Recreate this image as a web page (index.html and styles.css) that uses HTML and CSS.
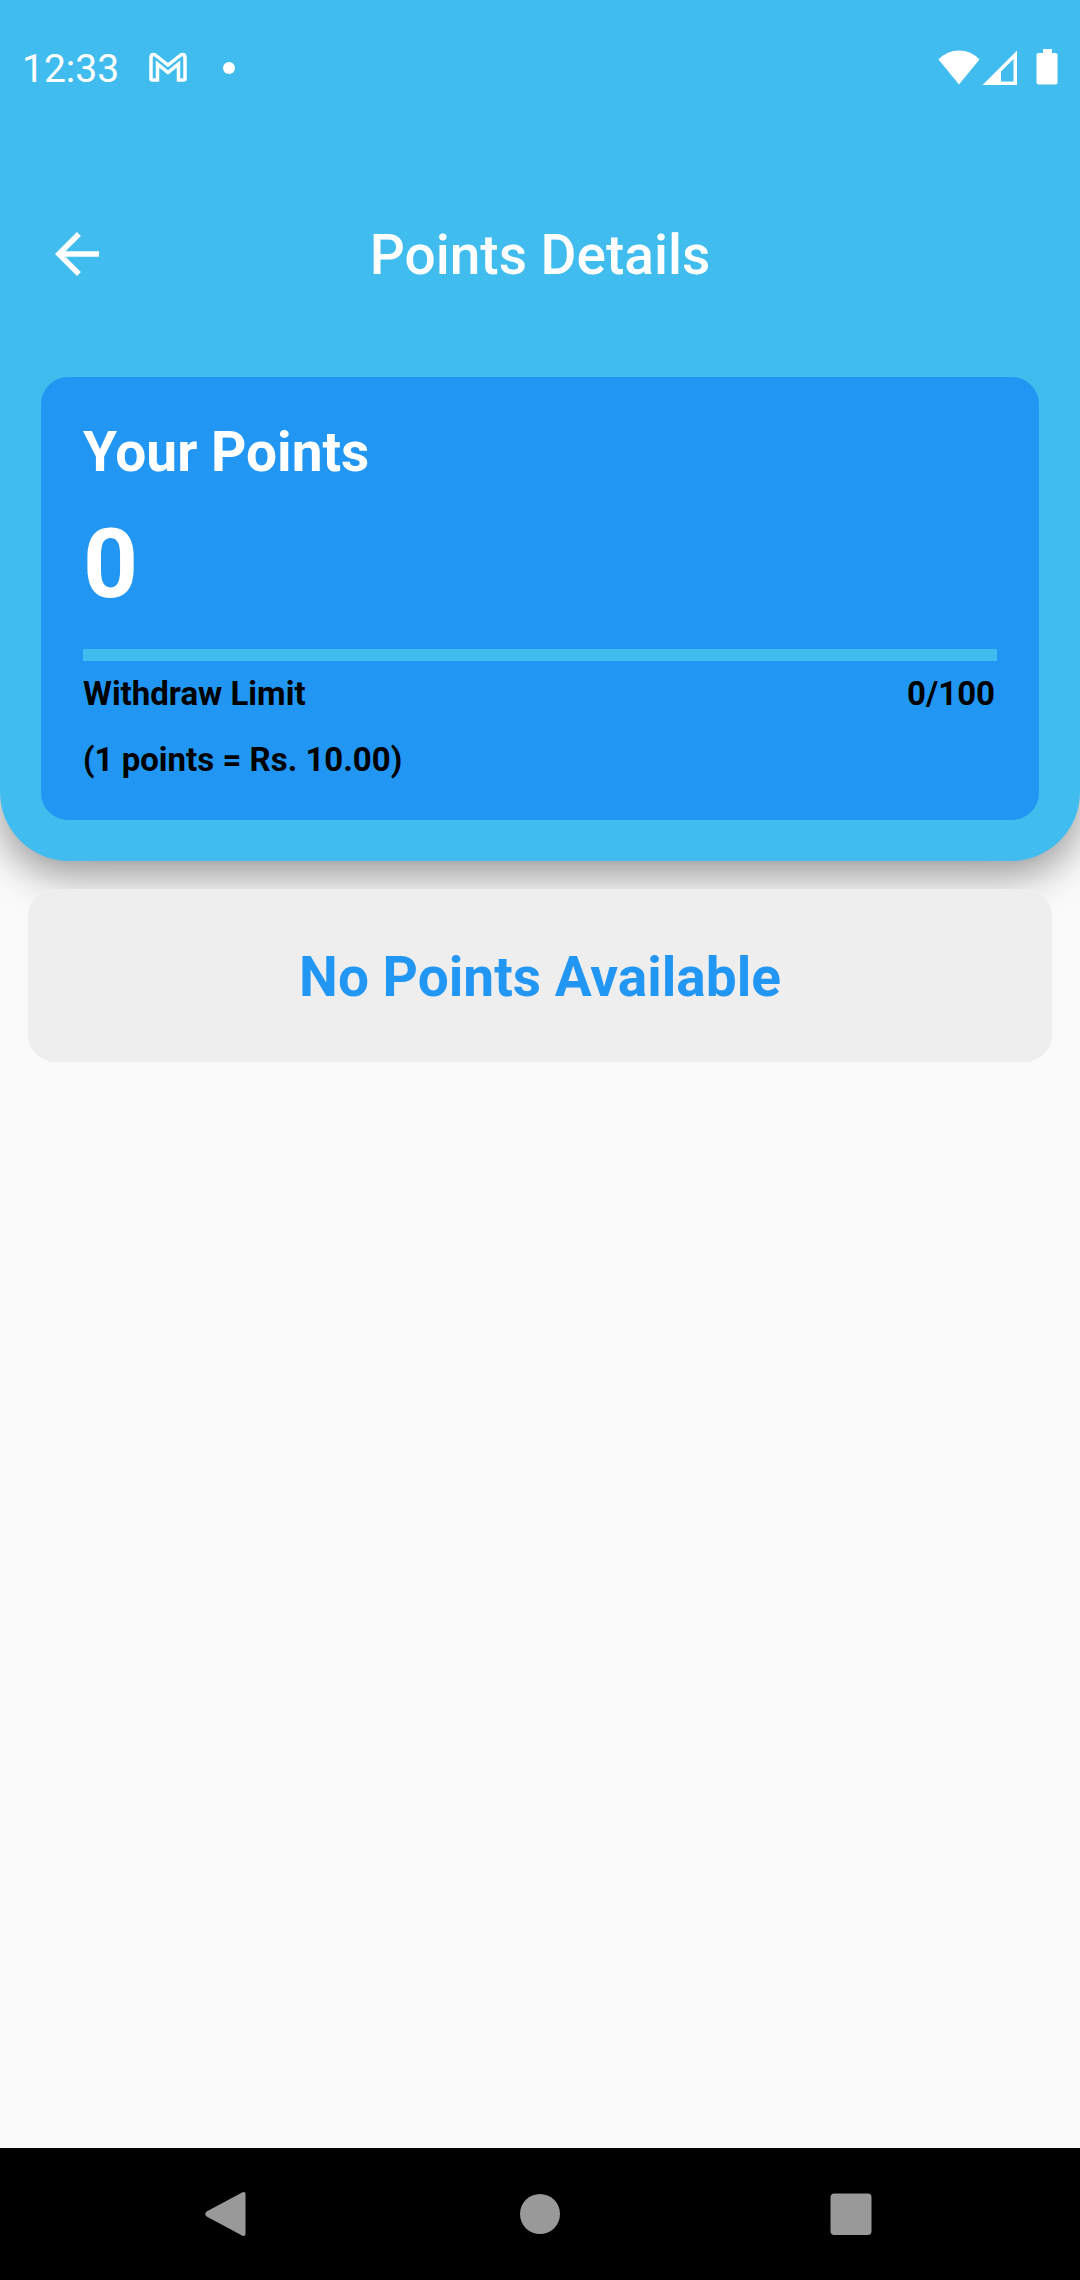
FILE: index.html
```html
<!DOCTYPE html>
<html lang="en">
<head>
<meta charset="utf-8">
<meta name="viewport" content="width=device-width, initial-scale=1">
<title>Points Details</title>
<link rel="stylesheet" href="styles.css">
</head>
<body>
<div class="screen">
  <header class="header">
    <div class="status-bar">
      <div class="status-left">
        <span class="clock">12:33</span>
        <svg class="gmail-icon" viewBox="0 0 40 32" aria-hidden="true">
          <path d="M3 26.500V6Q3 2.500 5.500 2.500Q7 2.500 8 3.500L20 13L32 3.500Q33 2.500 34.500 2.500Q37 2.500 37 6V26.500Q37 28 35.500 28H30.500V12L20 20.500L9.500 12V28H4.500Q3 28 3 26.500Z" fill="none" stroke="#fff" stroke-width="3.500"/>
        </svg>
        <span class="status-dot"></span>
      </div>
      <div class="status-right">
        <svg class="wifi-icon" viewBox="0 0 42 36" aria-hidden="true"><path d="M21 34.500L0.500 9.500Q9 0.500 21 0.500T41.500 9.500Z" fill="#fff"/></svg>
        <svg class="signal-icon" viewBox="0 0 36 36" aria-hidden="true"><path d="M35 0.500V35H0.500ZM31.500 9L19 21.500V31.500H31.500Z" fill="#fff" fill-rule="evenodd"/></svg>
        <svg class="battery-icon" viewBox="0 0 22 36" aria-hidden="true"><path d="M7 -1H16V3H19.500Q21.500 3 21.500 5V32.500Q21.500 34.500 19.500 34.500H2.500Q0.500 34.500 0.500 32.500V5Q0.500 3 2.500 3H7Z" fill="#fff"/></svg>
      </div>
    </div>
    <div class="app-bar">
      <button class="back-button" type="button" aria-label="Back">
        <svg class="back-icon" viewBox="0 0 24 24" aria-hidden="true"><path d="M20 11H7.830l5.590-5.590L12 4l-8 8 8 8 1.410-1.410L7.830 13H20v-2z" fill="#fff"/></svg>
      </button>
      <h1 class="title">Points Details</h1>
    </div>
    <section class="points-card">
      <h2 class="card-title">Your Points</h2>
      <p class="points-value">0</p>
      <progress class="limit-bar" value="0" max="100" aria-labelledby="limit-label"></progress>
      <div class="limit-row">
        <span id="limit-label">Withdraw Limit</span>
        <span>0/100</span>
      </div>
      <p class="rate">(1 points = Rs. 10.00)</p>
    </section>
  </header>
  <main class="content">
    <p class="empty-card">No Points Available</p>
  </main>
  <nav class="nav-bar" aria-label="System">
    <button class="nav-button" type="button" aria-label="Back">
      <svg class="nav-icon" viewBox="0 0 48 48" aria-hidden="true"><path d="M38.500 4V44L3 25Q1.500 24 3 23Z" fill="#999" stroke="#999" stroke-width="4" stroke-linejoin="round"/></svg>
    </button>
    <button class="nav-button" type="button" aria-label="Home">
      <svg class="nav-icon" viewBox="0 0 48 48" aria-hidden="true"><circle cx="24" cy="24" r="20" fill="#999"/></svg>
    </button>
    <button class="nav-button" type="button" aria-label="Recent apps">
      <svg class="nav-icon" viewBox="0 0 48 48" aria-hidden="true"><rect x="3.500" y="3.500" width="41" height="41.500" rx="4" fill="#999"/></svg>
    </button>
  </nav>
</div>
</body>
</html>
```
FILE: styles.css
```css
* {
  box-sizing: border-box;
}

body {
  margin: 0;
  background: #fafafa;
  font-family: Roboto, sans-serif;
}

h1,
h2,
p {
  margin: 0;
}

button {
  padding: 0;
  border: 0;
  background: none;
}

svg {
  display: block;
  overflow: visible;
}

.screen {
  display: flex;
  flex-direction: column;
  min-height: 100vh;
}

.header {
  padding-bottom: 41px;
  border-radius: 0 0 69px 69px;
  background: #40bdee;
  box-shadow: 0 14px 40px rgba(0, 0, 0, 0.4);
  color: #fff;
}

.status-bar {
  display: flex;
  align-items: center;
  justify-content: space-between;
  height: 136px;
  padding: 0 22px;
}

.status-left,
.status-right {
  display: flex;
  align-items: center;
}

.clock {
  padding-top: 2px;
  font-size: 39px;
  line-height: 46px;
}

.gmail-icon {
  width: 40px;
  height: 32px;
  margin-left: 29px;
}

.status-dot {
  width: 12px;
  height: 12px;
  margin-left: 35px;
  border-radius: 50%;
  background: #fff;
}

.wifi-icon {
  width: 42px;
  height: 36px;
}

.signal-icon {
  width: 36px;
  height: 36px;
  margin-left: 2px;
}

.battery-icon {
  width: 22px;
  height: 36px;
  margin-left: 18px;
}

.app-bar {
  display: grid;
  grid-template-columns: 66px 1fr 66px;
  align-items: center;
  height: 236px;
  padding: 0 44px;
}

.back-icon {
  width: 66px;
  height: 66px;
}

.title {
  padding-top: 2px;
  font-size: 55px;
  font-weight: 500;
  line-height: 64px;
  text-align: center;
}

.points-card {
  margin: 5px 41px 0;
  padding: 43px 42px 41px;
  border-radius: 27px;
  background: #2196f3;
}

.card-title {
  font-size: 55px;
  font-weight: 700;
  line-height: 64px;
}

.points-value {
  margin-top: 24px;
  font-size: 96px;
  font-weight: 700;
  line-height: 112px;
}

.limit-bar {
  display: block;
  width: 100%;
  height: 12px;
  margin-top: 29px;
  border: 0;
  appearance: none;
  background: #40bdee;
}

.limit-bar::-webkit-progress-bar {
  background: #40bdee;
}

.limit-row {
  display: flex;
  justify-content: space-between;
  margin-top: 14px;
  padding-right: 2px;
}

.limit-row,
.rate {
  color: #000;
  font-size: 33px;
  font-weight: 700;
  line-height: 38px;
}

.rate {
  margin-top: 28px;
}

.content {
  flex: 1;
  padding: 28px;
}

.empty-card {
  position: relative;
  padding: 56px 54px 53px;
  border-radius: 27px;
  background: #eee;
  color: #2196f3;
  font-size: 55px;
  font-weight: 700;
  line-height: 64px;
  text-align: center;
}

.nav-bar {
  display: grid;
  grid-template-columns: repeat(3, 1fr);
  height: 132px;
  padding: 0 74px;
  background: #000;
}

.nav-button {
  display: flex;
  align-items: center;
  justify-content: center;
}

.nav-icon {
  width: 48px;
  height: 48px;
}
```
